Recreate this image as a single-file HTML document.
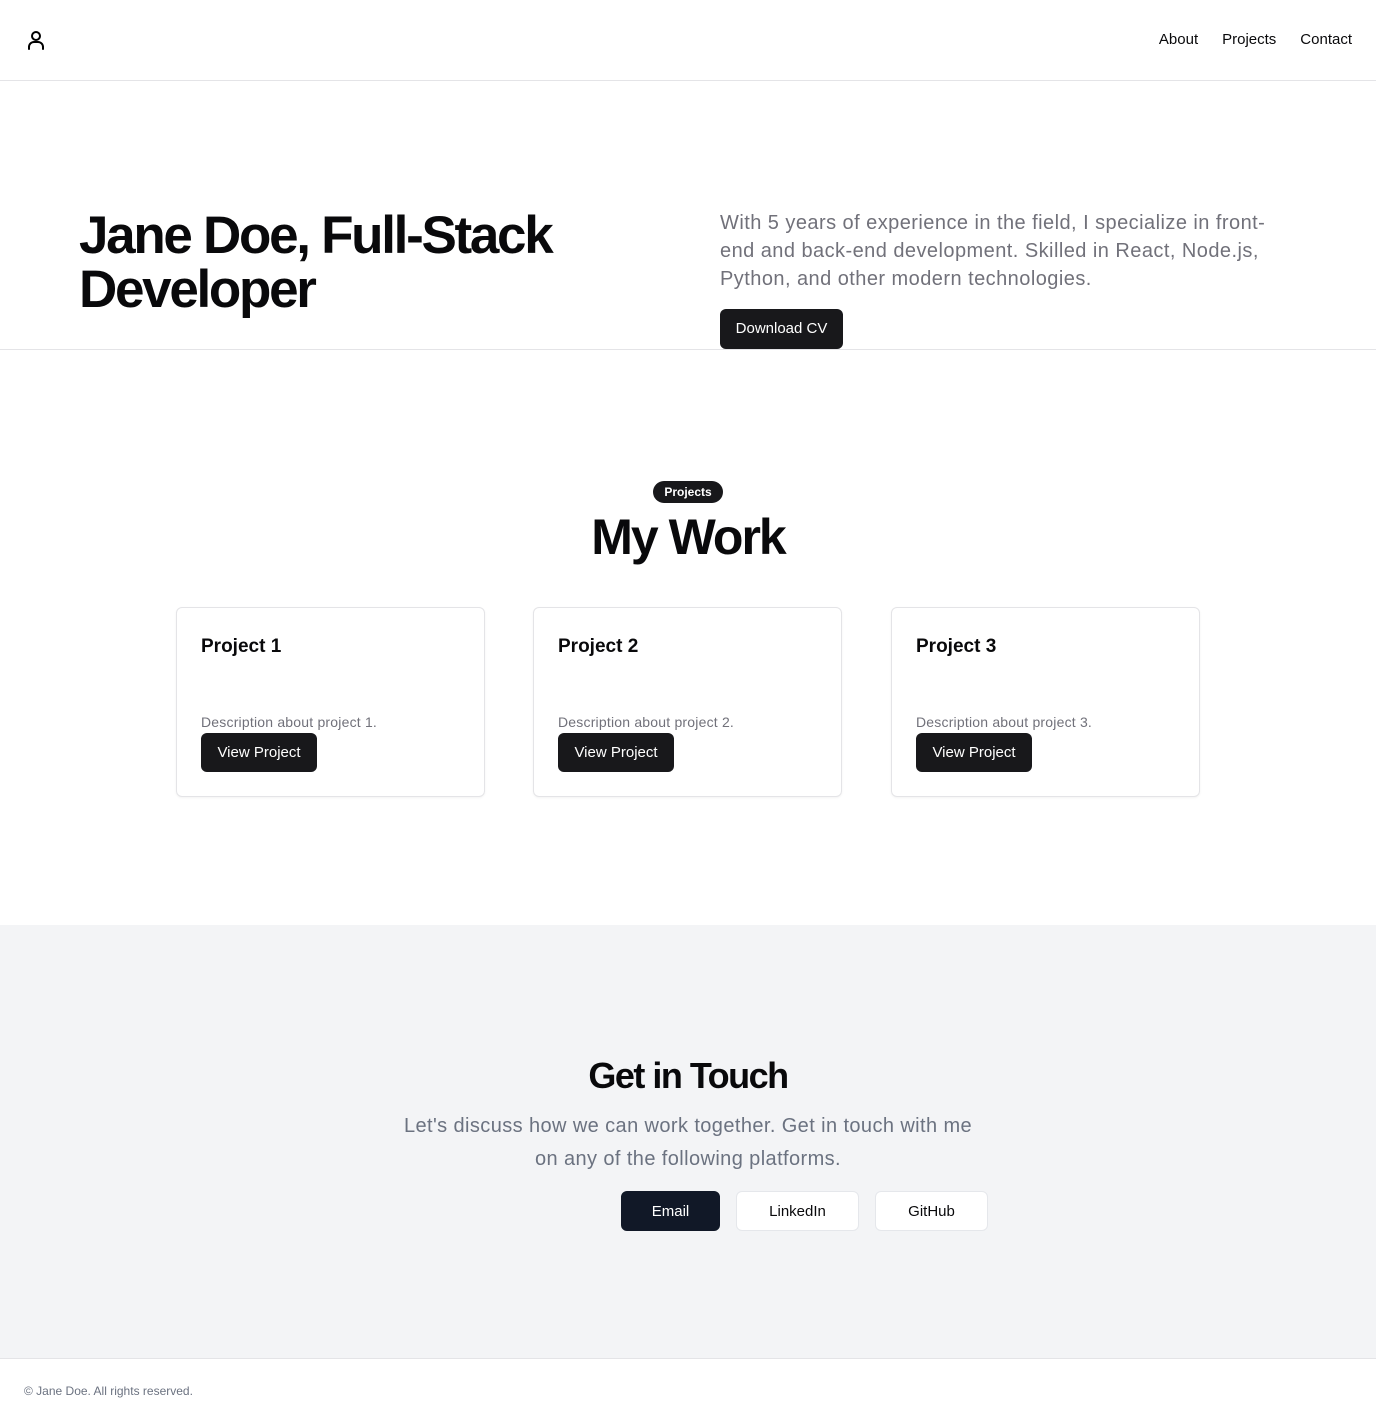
<!DOCTYPE html>
<html><head><meta charset="utf-8"><style>
*{box-sizing:border-box;margin:0;padding:0}
body{width:1376px;height:1424px;font-family:"Liberation Sans",sans-serif;color:#09090b;background:#fff;position:relative}
.nav{height:81px;border-bottom:1px solid #e4e4e7;position:relative}
.nav svg{position:absolute;left:24px;top:28px}
.links{position:absolute;right:24px;top:31px;font-size:15px;display:flex;gap:24px}
.hero{height:269px;border-bottom:1px solid #e4e4e7;position:relative}
h1{position:absolute;left:79px;top:128px;font-size:53px;line-height:54px;font-weight:700;letter-spacing:-2.3px;width:560px}
.hero p{position:absolute;left:720px;top:128px;width:570px;font-size:20px;line-height:28px;color:#71717a;letter-spacing:0.45px}
.btn{display:inline-block;background:#18181b;color:#fff;border-radius:6px;font-size:15px}
.cv{position:absolute;left:720px;top:228px;width:123px;height:40px;line-height:40px;text-align:center}
.badge{position:absolute;left:653px;top:481px;width:70px;height:22px;border-radius:11px;background:#18181b;color:#fff;font-size:12px;font-weight:700;text-align:center;line-height:22px}
h2{position:absolute;left:0;width:1376px;text-align:center;font-weight:700}
.card{position:absolute;top:607px;width:309px;height:190px;border:1px solid #e4e4e7;border-radius:6px;box-shadow:0 1px 2px rgba(0,0,0,.05)}
.card h3{position:absolute;left:24px;top:28px;font-size:19px}
.card p{position:absolute;left:24px;top:106px;font-size:14px;color:#71717a;letter-spacing:0.2px}
.card .btn{position:absolute;left:24px;top:125px;width:116px;height:39px;line-height:39px;text-align:center}
.contact{position:absolute;top:925px;left:0;width:1376px;height:434px;background:#f3f4f6;border-bottom:1px solid #e4e4e7}
.contact p{position:absolute;left:393px;top:185px;width:590px;text-align:center;font-size:20px;line-height:33px;color:#6b7280;letter-spacing:0.4px}
.cb{position:absolute;top:266px;height:40px;line-height:40px;text-align:center;font-size:15px;border-radius:6px;background:#fff;border:1px solid #e5e7eb}
footer{position:absolute;top:1384px;left:24px;font-size:12px;color:#6b7280}
</style></head><body>
<div class="nav"><svg width="24" height="24" viewBox="0 0 24 24" fill="none" stroke="#000" stroke-width="2" stroke-linecap="round"><circle cx="12" cy="8" r="4"/><path d="M5 21v-2a5 5 0 0 1 5-5h4a5 5 0 0 1 5 5v2"/></svg>
<div class="links"><span>About</span><span>Projects</span><span>Contact</span></div></div>
<div class="hero"><h1>Jane Doe, Full-Stack Developer</h1>
<p>With 5 years of experience in the field, I specialize in front-end and back-end development. Skilled in React, Node.js, Python, and other modern technologies.</p>
<span class="btn cv">Download CV</span></div>
<div class="badge">Projects</div>
<h2 style="top:508px;font-size:50px;letter-spacing:-2px">My Work</h2>
<div class="card" style="left:176px"><h3>Project 1</h3><p>Description about project 1.</p><span class="btn">View Project</span></div>
<div class="card" style="left:533px"><h3>Project 2</h3><p>Description about project 2.</p><span class="btn">View Project</span></div>
<div class="card" style="left:891px"><h3>Project 3</h3><p>Description about project 3.</p><span class="btn">View Project</span></div>
<div class="contact"><h2 style="top:130px;font-size:36px;letter-spacing:-1.5px">Get in Touch</h2>
<p>Let's discuss how we can work together. Get in touch with me on any of the following platforms.</p>
<span class="cb" style="left:621px;width:99px;background:#111827;color:#fff;border-color:#111827">Email</span>
<span class="cb" style="left:736px;width:123px">LinkedIn</span>
<span class="cb" style="left:875px;width:113px">GitHub</span></div>
<footer>© Jane Doe. All rights reserved.</footer>
</body></html>
